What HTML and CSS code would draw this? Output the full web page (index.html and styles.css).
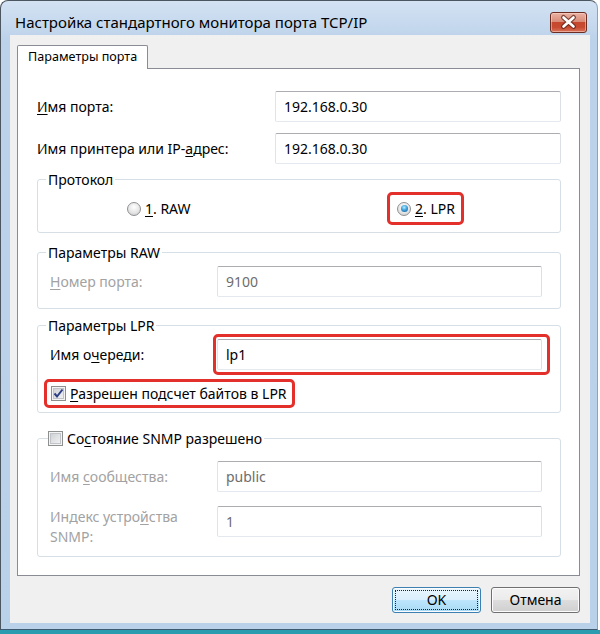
FILE: index.html
```html
<!DOCTYPE html>
<html lang="ru">
<head>
    <meta charset="UTF-8">
    <meta name="viewport" content="width=device-width, initial-scale=1.0">
    <title>Настройка стандартного монитора порта TCP/IP</title>
    <link rel="stylesheet" href="styles.css">
</head>
<body>

<div class="window">
    <div class="titlebar">
        <span class="title">Настройка стандартного монитора порта TCP/IP</span>
        <span class="close-btn">
            <svg width="37" height="21" viewBox="0 0 37 21">
                <path d="M13.5 5.5 L23.5 14.5 M23.5 5.5 L13.5 14.5" stroke="#5e2418" stroke-width="5" stroke-linecap="round" opacity="0.75"/>
                <path d="M13.5 5.5 L23.5 14.5 M23.5 5.5 L13.5 14.5" stroke="#ffffff" stroke-width="2.6" stroke-linecap="round"/>
            </svg>
        </span>
    </div>

    <div class="client">
        <div class="tabs">
            <span class="tab">Параметры порта</span>
        </div>

        <div class="panel">
            <div class="row">
                <span class="label"><u>И</u>мя порта:</span>
                <span class="field">192.168.0.30</span>
            </div>
            <div class="row">
                <span class="label">Имя принтера или IP-<u>а</u>дрес:</span>
                <span class="field">192.168.0.30</span>
            </div>

            <fieldset class="group group-protocol">
                <legend>Протокол</legend>
                <div class="radios">
                    <span class="option"><span class="radio"></span><span><u>1</u>. RAW</span></span>
                    <span class="option hl hl-radio"><span class="radio checked"></span><span><u>2</u>. LPR</span></span>
                </div>
            </fieldset>

            <fieldset class="group group-raw">
                <legend>Параметры RAW</legend>
                <div class="row">
                    <span class="label label-small disabled"><u>Н</u>омер порта:</span>
                    <span class="field dim">9100</span>
                </div>
            </fieldset>

            <fieldset class="group group-lpr">
                <legend>Параметры LPR</legend>
                <div class="row">
                    <span class="label label-small">Имя о<u>ч</u>ереди:</span>
                    <span class="field hl hl-field">lp1</span>
                </div>
                <div class="check-row">
                    <span class="option hl hl-check">
                        <span class="checkbox">
                            <svg width="13" height="13" viewBox="0 0 13 13">
                                <path d="M2.5 6.5 L5 9.5 L10.5 2.5" fill="none" stroke="#2b3f86" stroke-width="2"/>
                            </svg>
                        </span>
                        <span><u>Р</u>азрешен подсчет байтов в LPR</span>
                    </span>
                </div>
            </fieldset>

            <fieldset class="group group-snmp">
                <legend class="legend-check">
                    <span class="option">
                        <span class="checkbox"></span>
                        <span>Со<u>с</u>тояние SNMP разрешено</span>
                    </span>
                </legend>
                <div class="row">
                    <span class="label label-small disabled">Имя <u>с</u>ообщества:</span>
                    <span class="field dim">public</span>
                </div>
                <div class="row row-top">
                    <span class="label label-small disabled">Индекс устро<u>й</u>ства<br>SNMP:</span>
                    <span class="field dim">1</span>
                </div>
            </fieldset>
        </div>

        <div class="buttons">
            <span class="btn btn-default">OK</span>
            <span class="btn">Отмена</span>
        </div>
    </div>
</div>
<div class="desk-edge"></div>

</body>
</html>
```

FILE: styles.css
```css
body {
    margin: 0;
    padding: 0;
    background: #ffffff;
    font-family: 'Noto Sans', 'Open Sans', sans-serif;
    font-size: 14px;
    color: #000000;
}

u {
    text-underline-offset: 2px;
}

.window {
    box-sizing: border-box;
    width: 598px;
    height: 630px;
    padding: 0 7px 6px 9px;
    background: linear-gradient(#d3e2f3, #bcd2ea 40px, #bad1ea);
    border: 1px solid #4c5661;
    border-right-color: #8ea3ba;
    border-bottom: 1px solid #3f5a73;
    border-radius: 8px 8px 0 0;
    display: flex;
    flex-direction: column;
}

.desk-edge {
    height: 4px;
    background: #2a9cb0;
}

.titlebar {
    height: 36px;
    display: flex;
    justify-content: space-between;
    align-items: flex-start;
}

.title {
    margin: 11px 0 0 5px;
    font-size: 15px;
    line-height: 20px;
    color: #000000;
}

.close-btn {
    margin: 11px 3px 0 0;
    box-sizing: border-box;
    width: 37px;
    height: 21px;
    border: 1px solid #6b2d22;
    border-radius: 3px;
    background: linear-gradient(#eab2a4 0%, #d98c78 45%, #c5472e 50%, #c84a30 75%, #d9755c 100%);
    box-shadow: inset 0 0 0 1px rgba(255, 220, 210, 0.5);
    display: flex;
}

.close-btn svg {
    margin: -1px;
}

.client {
    flex: 1;
    background: #f0f0f0;
    padding: 10px 10px 10px 7px;
    display: flex;
    flex-direction: column;
}

.tabs {
    display: flex;
    height: 23px;
}

.tab {
    position: relative;
    z-index: 1;
    box-sizing: border-box;
    width: 131px;
    height: 24px;
    padding-left: 10px;
    font-size: 12.6px;
    line-height: 22px;
    background: #ffffff;
    border: 1px solid #898c95;
    border-bottom: none;
    border-radius: 2px 2px 0 0;
}

.panel {
    background: #ffffff;
    border: 1px solid #898c95;
    padding: 22px 18px 18px 19px;
}

.row {
    display: flex;
    align-items: center;
    height: 31px;
}

.row + .row {
    margin-top: 11px;
}

.label {
    width: 238px;
    flex-shrink: 0;
}

.label-small {
    width: 167px;
}

.disabled {
    color: #a2a2a2;
}

.field {
    flex: 1;
    box-sizing: border-box;
    height: 31px;
    line-height: 29px;
    padding-left: 8px;
    border: 1px solid;
    border-color: #abadb3 #dbdfe6 #e3e9ef #e2e3ea;
    border-radius: 2px;
    background: #ffffff;
}

.dim {
    color: #6d6d6d;
}

.group {
    margin: 0;
    border: 1px solid #d5dfe5;
    border-radius: 3px;
    padding: 0 18px 0 12px;
}

.group legend {
    margin-left: -4px;
    padding: 0 2px;
    line-height: 18px;
}

.group-protocol {
    margin-top: 7px;
    padding-top: 8px;
    padding-bottom: 11px;
}

.group-raw {
    margin-top: 11px;
    padding-top: 4px;
    padding-bottom: 11px;
}

.group-lpr {
    margin-top: 8px;
    padding-top: 4px;
    padding-bottom: 7px;
}

.group-snmp {
    margin-top: 14px;
    padding-top: 10px;
    padding-bottom: 9px;
}

.group .legend-check {
    line-height: 20px;
    margin-left: -2px;
    padding: 0 2px 0 0;
}

.row.row-top {
    align-items: flex-start;
    height: auto;
    margin-top: 14px;
}

.row-top .label {
    line-height: 20px;
    margin-top: 1px;
}

.radios {
    display: grid;
    grid-template-columns: 270px auto;
    padding-left: 77px;
}

.option {
    display: inline-flex;
    align-items: center;
    gap: 4px;
    line-height: 24px;
    justify-self: start;
}

.radio {
    box-sizing: border-box;
    width: 14px;
    height: 14px;
    border-radius: 50%;
    border: 1px solid #8e9093;
    background: radial-gradient(circle at 50% 35%, #ffffff 0%, #e6e6e6 55%, #c4c4c4 100%);
    display: flex;
    align-items: center;
    justify-content: center;
}

.radio.checked::before {
    content: '';
    width: 7px;
    height: 7px;
    border-radius: 50%;
    background: radial-gradient(circle at 45% 35%, #b8ecff 0%, #3fa3dd 45%, #0f4f8c 100%);
}

.checkbox {
    box-sizing: border-box;
    width: 15px;
    height: 15px;
    border: 1px solid #8e8f8f;
    background: linear-gradient(135deg, #c9ccd1, #f7f7f7);
    box-shadow: inset 0 0 0 1px #f4f4f4, inset 0 0 0 2px #c0c4c9;
    display: flex;
    align-items: center;
    justify-content: center;
}

.checkbox svg {
    display: block;
}

.check-row {
    margin-top: 13px;
    display: flex;
    padding-left: 1px;
}

.check-row .option {
    line-height: 22px;
}

/* red annotation frames */
.hl {
    position: relative;
}

.hl::after {
    content: '';
    position: absolute;
    border: 3px solid #e3302a;
    border-radius: 5px;
}

.hl-radio::after {
    left: -10px;
    right: -9px;
    top: -5px;
    bottom: -4px;
}

.hl-field::after {
    left: -5px;
    right: -9px;
    top: -6px;
    bottom: -6px;
}

.hl-check::after {
    left: -7px;
    right: -8px;
    top: -4px;
    bottom: -3px;
}

.buttons {
    margin-top: 11px;
    display: flex;
    justify-content: flex-end;
    gap: 10px;
}

.btn {
    box-sizing: border-box;
    width: 89px;
    height: 26px;
    line-height: 24px;
    text-align: center;
    border: 1px solid #707070;
    border-radius: 3px;
    background: linear-gradient(#f2f2f2 0%, #ebebeb 50%, #dddddd 50%, #cfcfcf 100%);
    box-shadow: inset 0 0 0 1px #fcfcfc;
}

.btn-default {
    border-color: #3c7fb1;
    background: linear-gradient(#eaf6fd 0%, #d9f0fc 50%, #bee6fd 50%, #a7d9f5 100%);
    outline: 1px dotted #222222;
    outline-offset: -4px;
}
```
